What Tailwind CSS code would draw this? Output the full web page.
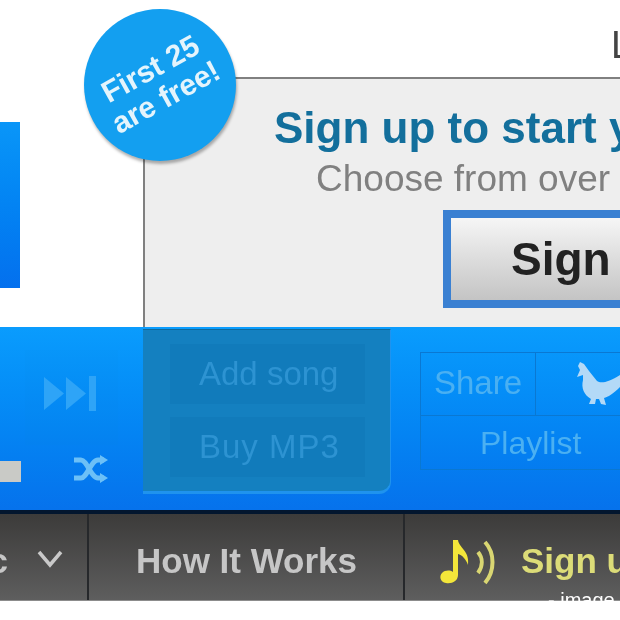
<!DOCTYPE html>
<html lang="en">
<head>
    <meta charset="UTF-8">
    <title>Sign up</title>
    <script src="https://cdn.jsdelivr.net/npm/@tailwindcss/browser@4"></script>
</head>
<body class="bg-white font-['Liberation_Sans',Arial,sans-serif]">
<div class="relative w-[620px] h-[620px] overflow-hidden bg-white blur-[0.7px]">

    <!-- top section -->
    <div class="relative flex h-[327px]">
        <div class="w-[143px] shrink-0 pt-[122px]">
            <div class="w-[20px] h-[166px] bg-gradient-to-b from-[#0a96f8] to-[#0470ee]"></div>
        </div>
        <div class="mt-[77px] flex-1 min-w-0 overflow-hidden border-t-2 border-l-2 border-[#808080] bg-[#eeeeee]">
            <div class="w-[700px] pl-[129px] pt-[24px]">
                <h1 class="text-[44px] leading-[50px] font-bold text-[#136f9c] whitespace-nowrap">Sign up to start your list</h1>
                <p class="text-[37px] leading-[42px] mt-[5px] ml-[42px] text-[#808080] whitespace-nowrap">Choose from over 15 million</p>
                <div class="ml-[169px] mt-[10px] w-[400px] h-[98px] border-[8px] border-[#3a80d2] bg-gradient-to-b from-[#f6f6f6] to-[#c4c4c4] pl-[60px]">
                    <span class="text-[46px] leading-[82px] font-bold text-[#222222]">Sign up</span>
                </div>
            </div>
        </div>

        <span class="absolute left-[611px] top-[24px] text-[38px] leading-[42px] text-[#444444]">L</span>

        <div class="absolute left-[84px] top-[9px] w-[152px] h-[152px] rounded-full bg-[#139ff0] shadow-[1px_3px_3px_rgba(0,0,0,0.3)] flex items-center justify-center">
            <p class="-rotate-[29deg] -translate-x-[2px] -translate-y-[2px] text-center text-[30px] leading-[32px] font-bold text-[#e4f4fc] whitespace-nowrap">First 25<br>are free!</p>
        </div>
    </div>

    <!-- player bar -->
    <div class="flex h-[183px] border-b-[4px] border-[#03162e] bg-gradient-to-b from-[#0a9cfd] to-[#0672ec] box-content">
        <div class="relative w-[143px] shrink-0">
            <div class="absolute left-[25px] top-[23px] w-[93px] h-[95px] bg-[#0a80d8]/5"></div>
            <svg class="absolute left-[44px] top-[49px]" width="53" height="35" viewBox="0 0 53 35" fill="#2ea4f7">
                <path d="M0 1 L20 17.5 L0 34 Z"/>
                <path d="M22 1 L42 17.5 L22 34 Z"/>
                <rect x="45" y="0" width="7" height="35"/>
            </svg>
            <div class="absolute left-0 top-[134px] w-[21px] h-[21px] bg-[#c9cac6]"></div>
            <svg class="absolute left-[73px] top-[128px]" width="36" height="28" viewBox="0 0 36 28" fill="none" stroke="#6cc0f7" stroke-width="5">
                <path d="M1 5 H8 C14 5 18 23 25 23 H31"/>
                <path d="M1 23 H8 C14 23 18 5 25 5 H31"/>
                <path d="M27 0 L35 5 L27 10 Z M27 18 L35 23 L27 28 Z" fill="#6cc0f7" stroke="none"/>
            </svg>
        </div>

        <div class="w-[248px] h-[165px] mt-[2px] shrink-0 flex flex-col gap-[13px] pl-[27px] pr-[25px] pt-[14px] rounded-br-[12px] border-t border-b-[3px] border-r-[1px] border-t-[#0f6a9c] border-b-[#1f93ee] border-r-[#1f93ee] bg-[#1480c0]">
            <div class="h-[60px] bg-[#117bbb] pl-[29px] text-[33px] leading-[60px] text-[#2d93d2]">Add song</div>
            <div class="h-[60px] bg-[#117bbb] pl-[29px] text-[33px] leading-[60px] tracking-[1px] text-[#2d93d2]">Buy MP3</div>
        </div>

        <div class="ml-[29px] mt-[25px] w-[240px] h-[118px] shrink-0 border border-[#0a78d2]">
            <div class="flex h-[63px] border-b border-[#0a78d2]">
                <div class="w-[115px] border-r border-[#0a78d2] pl-[13px] text-[33px] leading-[60px] text-[#4ab0f2]">Share</div>
                <div class="pl-[39px] pt-[5px]">
                    <svg width="60" height="50" viewBox="0 0 60 50" fill="#b3d9f7">
                        <path d="M5 4 L9 6 L14 13 L22 23 C26 26 34 24 45 17 L45 29 C38 36 33 39 29 40 L31 47 L26 46 L24 41 L21 41 L20 46 L14 46 L16 41 C9 37 6 30 8 22 L8 17 L2 19 L5 12 L3 8 Z"/>
                    </svg>
                </div>
            </div>
            <div class="pl-[59px] text-[32px] leading-[54px] text-[#4ab0f2]">Playlist</div>
        </div>
    </div>

    <!-- nav -->
    <nav class="flex h-[87px] bg-gradient-to-b from-[#3c3b3a] to-[#5e5e5e] border-b border-[#8c8c8c]">
        <div class="relative w-[89px] shrink-0 border-r-2 border-[#26282b] overflow-hidden">
            <span class="absolute right-[79px] top-[27px] text-[35px] leading-[40px] font-bold text-[#c6c6c6] whitespace-nowrap">Music</span>
            <svg class="absolute left-[37px] top-[36px]" width="26" height="18" viewBox="0 0 26 18" fill="none" stroke="#c9c9c9" stroke-width="3.5">
                <path d="M2 2 L13 15 L24 2"/>
            </svg>
        </div>
        <div class="w-[316px] shrink-0 border-r-2 border-[#26282b] pl-[47px] pt-[27px] text-[35px] leading-[40px] font-bold text-[#c6c6c6] whitespace-nowrap">How It Works</div>
        <div class="flex pl-[34px] pt-[25px] whitespace-nowrap">
            <svg width="60" height="46" viewBox="0 0 60 46" fill="none">
                <path d="M14 1 L19 1 C20 9 31 12 29 26 C27 20 23 16 19 15 L19 36 C19 42 13 45 7 44 C1 43 0 37 3 34 C6 31 11 31 14 33 Z" fill="#f3e63a"/>
                <path d="M39 13 C44 19 44 27 39 34" stroke="#d9d672" stroke-width="4"/>
                <path d="M46 3 C56 14 56 32 46 44" stroke="#d9d672" stroke-width="4"/>
            </svg>
            <span class="ml-[22px] mt-[2px] text-[35px] leading-[40px] font-bold text-[#dcdc78]">Sign up</span>
        </div>
    </nav>

    <span class="absolute left-[548px] top-[588px] text-[20px] leading-[24px] h-[13px] overflow-hidden text-white whitespace-nowrap">- image</span>
</div>
</body>
</html>
